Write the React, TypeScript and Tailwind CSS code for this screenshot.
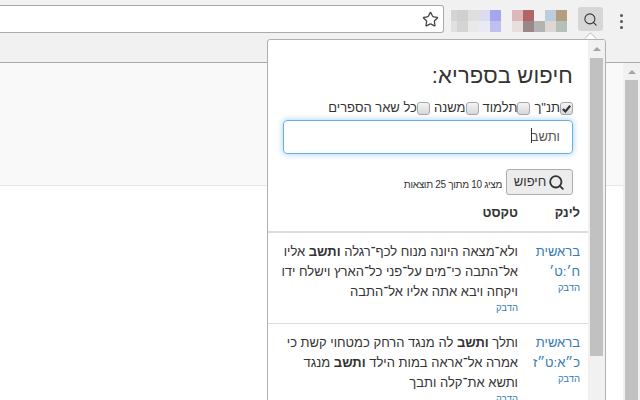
import { Search, Star } from 'lucide-react'

const blocksA = [
  ['#d4d4d4', '#d0d0d0', '#dfdfdf', '#dcdcf0', '#a5a5f0'],
  ['#e0e0e0', '#d4d4d4', '#e9e9e9', '#eaeaf5', '#c0c0f0'],
]

const blocksB = [
  ['#dcb8bc', '#b06666', 'transparent', '#bccde0', '#b59e80'],
  ['#e8dede', '#9a8888', '#b3b3b3', '#ded8d4', '#b4c0b8'],
]

// blurred-out extension icons in the toolbar
function Blocks({ rows, first }: { rows: string[][]; first: string }) {
  return (
    <div className="flex flex-col">
      {rows.map((row, i) => (
        <div key={i} className="flex h-[11px]">
          {row.map((c, j) => (
            <div key={j} className={j === 0 ? first : 'w-[11px]'} style={{ backgroundColor: c }} />
          ))}
        </div>
      ))}
    </div>
  )
}

function Check({ label, checked }: { label: string; checked?: boolean }) {
  return (
    <label className="flex items-center">
      <span className="flex h-[13px] w-[13px] items-center justify-center rounded-[3px] border border-[#a6a6a6] bg-gradient-to-b from-[#f4f4f4] to-[#d8d8d8]">
        {checked && (
          <svg viewBox="0 0 12 12" className="h-[11px] w-[11px]">
            <path d="M2 6.5 L4.8 9.2 L10 3" fill="none" stroke="#333" strokeWidth="2.4" />
          </svg>
        )}
      </span>
      <span>{label}</span>
    </label>
  )
}

function ScrollBar({ thumbTop, thumbHeight }: { thumbTop: string; thumbHeight: string }) {
  return (
    <div className="flex w-[17px] shrink-0 flex-col items-center bg-[#f1f1f1]">
      <div className={`flex w-full items-center justify-center ${thumbTop}`}>
        <div className="h-0 w-0 border-x-[4px] border-b-[4px] border-x-transparent border-b-[#a3a3a3]" />
      </div>
      <div className={`w-[13px] bg-[#c1c1c1] ${thumbHeight}`} />
    </div>
  )
}

function Row({ book, ref_, children }: { book: string; ref_: string; children: React.ReactNode }) {
  return (
    <div className="flex h-[91px] border-b border-[#ddd] pt-[9px]">
      <div className="w-[62px] shrink-0 pr-2 text-[13px] leading-5 text-[#337ab7]">
        <div>{book}</div>
        <div>{ref_}</div>
        <div className="text-[9.5px] leading-[12px]">הדבק</div>
      </div>
      <div className="flex-1 pr-2 pl-[6px] text-[13px] leading-5 text-[#333]">
        <div>{children}</div>
        <div className="text-[9.5px] leading-[12px] text-[#337ab7]">הדבק</div>
      </div>
    </div>
  )
}

export default function App() {
  return (
    <div className="relative flex h-[400px] w-[640px] flex-col overflow-hidden bg-white font-['Liberation_Sans',sans-serif]">
      {/* browser chrome */}
      <div className="h-[63px] shrink-0 border-b border-[#aaa] bg-[#f1f1f1] pt-[5px]">
        <div className="flex items-start">
          <div className="flex h-[28px] w-[444px] items-center justify-end rounded-r-[3px] border border-l-0 border-[#aaa] bg-white pr-[4px]">
            <Star size={17} strokeWidth={1.8} className="text-[#444]" />
          </div>
          <div className="mt-[5px] ml-[7px]">
            <Blocks rows={blocksA} first="w-[6px]" />
          </div>
          <div className="mt-[5px] ml-[11px]">
            <Blocks rows={blocksB} first="w-[11px]" />
          </div>
          <div className="mt-[2px] ml-[11px] flex h-[24px] w-[25px] items-center justify-center rounded-[3px] bg-[#d6d6d6]">
            <Search size={15} strokeWidth={1.7} className="text-[#333]" />
          </div>
          <div className="mt-[9px] ml-[17px] flex flex-col gap-[3px]">
            <div className="h-[3px] w-[3px] rounded-full bg-[#555]" />
            <div className="h-[3px] w-[3px] rounded-full bg-[#555]" />
            <div className="h-[3px] w-[3px] rounded-full bg-[#555]" />
          </div>
        </div>
      </div>

      {/* page behind the popup */}
      <div className="flex flex-1">
        <div className="flex-1">
          <div className="h-[123px] border-b border-[#e7e7e7] bg-[#f9f9f9]" />
        </div>
        <ScrollBar thumbTop="h-[17px]" thumbHeight="flex-1" />
      </div>

      {/* extension popup */}
      <div className="absolute top-[34px] left-[586px] h-[9px] w-[9px] rotate-45 rounded-[1px] border-t border-l border-[#aaa] bg-white" />
      <div className="absolute top-[39px] left-[267px] flex h-[375px] w-[339px] overflow-hidden rounded-t-[3px] border border-[#b0b0b0] bg-white">
        <div dir="rtl" className="w-[320px] shrink-0">
          <div className="px-[15px] pt-[21px]">
            <h1 className="text-[22px] leading-[30px] font-normal tracking-[0.15px] text-[#333]">חיפוש בספריא:</h1>
            <div className="mt-[9px] flex h-[16px] gap-[4px] text-[13px] leading-4 text-[#333]">
              <Check label={'תנ"ך'} checked />
              <Check label="תלמוד" />
              <Check label="משנה" />
              <Check label="כל שאר הספרים" />
            </div>
            <div className="mt-[4px] flex h-[34px] items-center rounded-[4px] border border-[#66afe9] px-[12px] text-[13px] text-[#555] shadow-[0_0_6px_rgba(102,175,233,0.6)]">
              <span className="relative">
                ותשב
                <span className="absolute top-px left-0 h-[15px] w-px bg-[#333]" />
              </span>
            </div>
            <div className="mt-[15px] flex items-end gap-[4px]">
              <div className="flex h-[26px] w-[67px] items-center justify-center gap-[2px] rounded-[3px] border border-[#adadad] bg-[#ececec] text-[13px] text-[#333]">
                <Search size={17} strokeWidth={2.6} />
                <span>חיפוש</span>
              </div>
              <span className="pb-[3px] text-[10px] leading-[14px] tracking-[-0.3px] text-[#333]">מציג 10 מתוך 25 תוצאות</span>
            </div>
          </div>

          <div className="mt-[8px] flex h-[30px] border-b-2 border-[#ddd] text-[13px] leading-5 font-bold text-[#333]">
            <div className="w-[62px] shrink-0 pr-2">לינק</div>
            <div className="flex-1 pr-2">טקסט</div>
          </div>

          <Row book="בראשית" ref_="ח׳:ט׳">
            ולא־מצאה היונה מנוח לכף־רגלה <b>ותשב</b> אליו אל־התבה כי־מים על־פני כל־הארץ וישלח ידו ויקחה ויבא אתה אליו אל־התבה
          </Row>
          <Row book="בראשית" ref_="כ״א:ט״ז">
            ותלך <b>ותשב</b> לה מנגד הרחק כמטחוי קשת כי אמרה אל־אראה במות הילד <b>ותשב</b> מנגד ותשא את־קלה ותבך
          </Row>
        </div>
        <ScrollBar thumbTop="h-[18px]" thumbHeight="h-[298px]" />
      </div>
    </div>
  )
}
